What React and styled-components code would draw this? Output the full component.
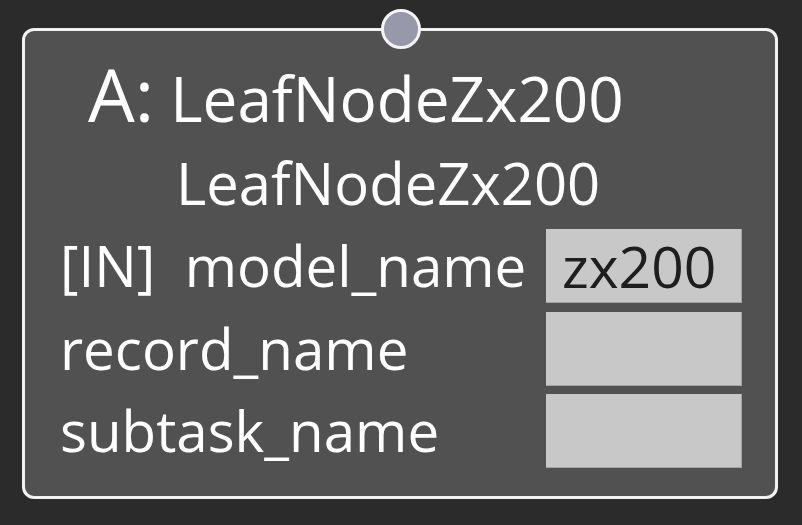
import React from 'react';
import styled, { createGlobalStyle } from 'styled-components';

const GlobalStyle = createGlobalStyle`
  html, body {
    margin: 0;
    padding: 0;
    background: #2b2b2b;
  }
  body {
    font-family: 'Open Sans', 'DejaVu Sans', sans-serif;
  }
`;

const Canvas = styled.div`
  width: 802px;
  height: 525px;
  padding: 28px 24px 0 22px;
  box-sizing: border-box;
  background: #2b2b2b;
`;

const Node = styled.div`
  position: relative;
  width: 756px;
  height: 471px;
  box-sizing: border-box;
  background: #515151;
  border: 3px solid #f2f2f2;
  border-radius: 12px;
  padding: 0 33px 28px 35px;
  display: flex;
  flex-direction: column;
  color: #fff;
`;

const Port = styled.div`
  position: absolute;
  top: -22px;
  left: 356px;
  width: 34px;
  height: 34px;
  border-radius: 50%;
  background: #9898ab;
  border: 3px solid #f4f4f4;
`;

const Title = styled.div`
  display: flex;
  align-items: baseline;
  padding-left: 28px;
  height: 94px;
  line-height: 94px;
  margin-top: 16px;
`;

const Prefix = styled.span`
  font-size: 74px;
  margin-right: 16px;
`;

const Name = styled.span`
  font-size: ${p => p.$size}px;
`;

const SubTitle = styled.div`
  padding-left: 116px;
  height: 84px;
  line-height: 84px;
  font-size: 58px;
`;

const Params = styled.div`
  display: grid;
  grid-template-columns: 1fr 196px;
  grid-auto-rows: 74px;
  row-gap: 8.5px;
  margin-top: auto;
`;

const Label = styled.div`
  font-size: 56.5px;
  line-height: 74px;
  white-space: pre;
`;

const Field = styled.div`
  background: #c8c8c8;
  border-right: 1px solid #a4a4a4;
  border-bottom: 1px solid #a4a4a4;
  box-sizing: border-box;
  color: #1e1e1e;
  font-size: 57px;
  line-height: 72px;
  padding: 1px 0 0 16px;
`;

const params = [
  { label: '[IN]  model_name', value: 'zx200' },
  { label: 'record_name', value: '' },
  { label: 'subtask_name', value: '' },
];

export default function App() {
  return (
    <>
      <GlobalStyle />
      <Canvas>
        <Node>
          <Port />
          <Title>
            <Prefix>A:</Prefix>
            <Name $size={62}>LeafNodeZx200</Name>
          </Title>
          <SubTitle>LeafNodeZx200</SubTitle>
          <Params>
            {params.map(p => (
              <React.Fragment key={p.label}>
                <Label>{p.label}</Label>
                <Field>{p.value}</Field>
              </React.Fragment>
            ))}
          </Params>
        </Node>
      </Canvas>
    </>
  );
}
